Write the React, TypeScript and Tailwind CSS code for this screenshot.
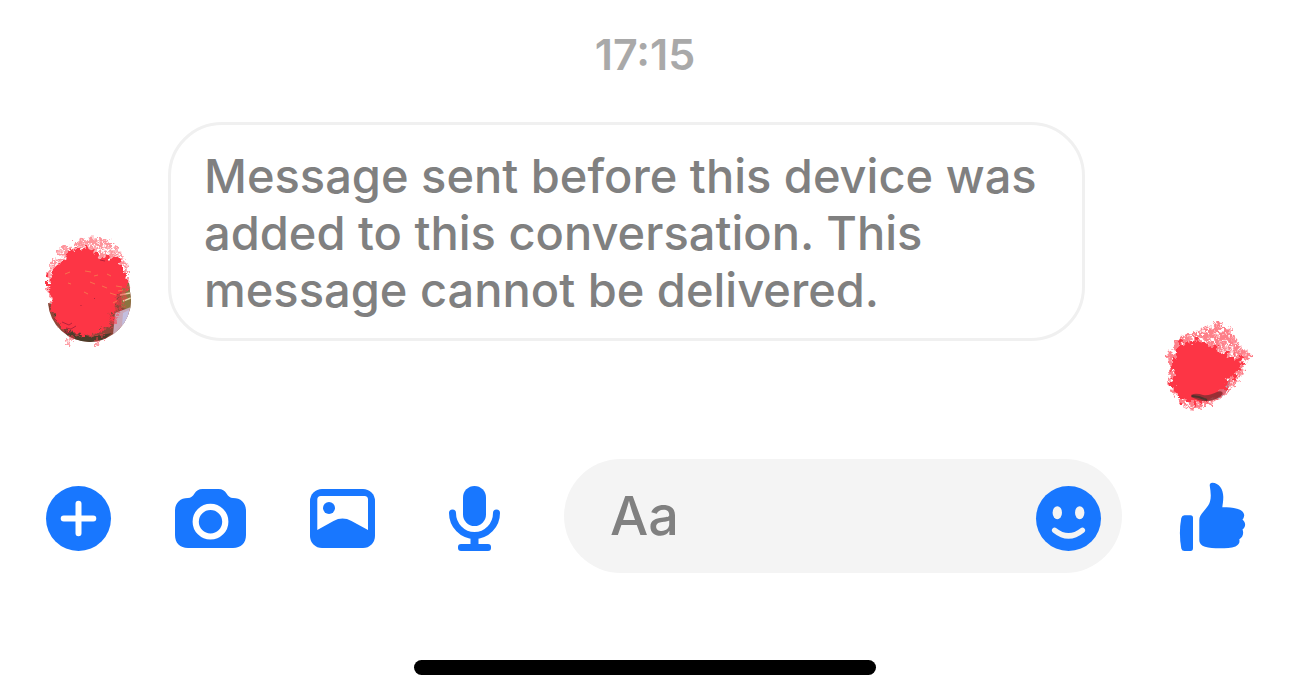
import type { ReactNode } from 'react';

const BLUE = '#1877ff';

interface IconButtonProps {
    label: string;
    children: ReactNode;
}

function IconButton({ label, children }: IconButtonProps) {
    return (
        <button type="button" aria-label={label} className="block shrink-0 cursor-pointer">
            <svg viewBox="0 0 72 72" className="block h-[72px] w-[72px]" fill={BLUE} aria-hidden="true">
                {children}
            </svg>
        </button>
    );
}

function SenderAvatar() {
    return (
        <svg viewBox="9 7 96 120" className="block h-[120px] w-24 shrink-0" role="img" aria-label="Sender">
            <defs>
                <filter id="sender-rough" x="-20%" y="-20%" width="140%" height="140%">
                    <feTurbulence type="fractalNoise" baseFrequency="0.16" numOctaves="4" seed="4" />
                    <feDisplacementMap in="SourceGraphic" scale="14" xChannelSelector="R" yChannelSelector="G" />
                    <feGaussianBlur stdDeviation="0.7" />
                </filter>
                <filter id="sender-grain" x="-20%" y="-20%" width="140%" height="140%">
                    <feTurbulence type="fractalNoise" baseFrequency="0.2 0.26" numOctaves="3" seed="9" result="noise" />
                    <feColorMatrix in="noise" type="matrix" values="0 0 0 0 0  0 0 0 0 0  0 0 0 0 0  6 0 0 0 -2.2" result="mask" />
                    <feComposite in="SourceGraphic" in2="mask" operator="in" result="spots" />
                    <feDisplacementMap in="spots" in2="noise" scale="10" xChannelSelector="R" yChannelSelector="G" />
                    <feGaussianBlur stdDeviation="0.7" />
                </filter>
                <clipPath id="sender-photo">
                    <path d="M18 78A42 42 0 0 0 60 117A42 42 0 0 0 101 75L99 58H80L56 84Z" />
                </clipPath>
            </defs>
            <g clipPath="url(#sender-photo)">
                <rect x="17" y="58" width="84" height="60" fill="#8f4638" />
                <path d="M92 58h9v28l-10-4z" fill="#8a7440" />
                <path d="M90 70l10-2M93 76l8-3" stroke="#e6d3a8" strokeWidth="1.5" />
                <path d="M85 88l16-6-4 19-14 9z" fill="#c9a8b8" />
                <path d="M93 88l6-3-2 12-5 4z" fill="#c3bfe0" />
                <path d="M17 78l9 12 14 14 20 8 22-4-12 10H42z" fill="#4a3d2a" />
            </g>
            <path
                d="M37 22L52 13l19-1 13 6 9 14 6 13 0 14-4 20-10 20-14 10-19 3-20-9-9-16-5-22-1-21 9-10 4-13Z"
                fill="#fd3a4a"
                opacity="0.55"
                filter="url(#sender-grain)"
            />
            <path
                d="M37 28L53 21l20 11 15 1 9 18 0 12-8 6-3 10-4 9-1 11-12 9-17 2-22-8-8-17-3-22 0-17 12-7Z"
                fill="#fd3544"
                filter="url(#sender-rough)"
            />
            <path d="M38 109v12M42 110v5M67 112v10M74 111v6" stroke="#fd3a4a" strokeWidth="4" opacity="0.5" filter="url(#sender-grain)" />
            <g fill="none" stroke="#f39a52" strokeWidth="1" opacity="0.6">
                <path d="M35 49l5-2M55 46l6 1M64 51l4-1M77 49l4 2M72 61l5 2M60 57l5 2M80 68l6 2M83 78l4-2M38 58l3 1M54 67l4 2M86 61l6 1M88 66l5-1" />
            </g>
            <g fill="none" stroke="#a31f38" strokeWidth="1" opacity="0.8">
                <path d="M32 97l7 3 3-2M36 103l5 1 5-3M51 80v1M64 73l1 1M70 35l5 1M24 93l3 3M34 107l6 1" />
            </g>
        </svg>
    );
}

function OwnAvatar() {
    return (
        <svg viewBox="12 8 96 96" className="block h-24 w-24 shrink-0" role="img" aria-label="Seen">
            <defs>
                <filter id="own-rough" x="-20%" y="-20%" width="140%" height="140%">
                    <feTurbulence type="fractalNoise" baseFrequency="0.18" numOctaves="4" seed="7" />
                    <feDisplacementMap in="SourceGraphic" scale="16" xChannelSelector="R" yChannelSelector="G" />
                    <feGaussianBlur stdDeviation="0.7" />
                </filter>
                <filter id="own-grain" x="-20%" y="-20%" width="140%" height="140%">
                    <feTurbulence type="fractalNoise" baseFrequency="0.2" numOctaves="3" seed="12" result="noise" />
                    <feColorMatrix in="noise" type="matrix" values="0 0 0 0 0  0 0 0 0 0  0 0 0 0 0  6 0 0 0 -2.1" result="mask" />
                    <feComposite in="SourceGraphic" in2="mask" operator="in" result="spots" />
                    <feDisplacementMap in="spots" in2="noise" scale="10" xChannelSelector="R" yChannelSelector="G" />
                    <feGaussianBlur stdDeviation="0.7" />
                </filter>
            </defs>
            <path d="M80 68c0 11-5 18-13 22l-5-6c7-3 13-8 18-16Z" fill="#a69cab" opacity="0.85" />
            <path
                d="M31 26L49 21l17-9 15 6 6 15 14 12-6 12-7 14-11 14-14 8-12 6-16-1-9-12-8-12 2-16-3-14Z"
                fill="#fd3a4a"
                opacity="0.65"
                filter="url(#own-grain)"
            />
            <path
                d="M29 34L50 30l12 5 12 9 12 2 8 6-7 10-8 8-5 11-12 7-16 6-15-3-8-15-1-22Z"
                fill="#fd3544"
                filter="url(#own-rough)"
            />
            <g opacity="0.9">
                <path d="M41 85c4-2 8-1 12 0 5 1 9-1 14-3 4-2 7 0 5 3-6 6-18 8-26 4l-5-2Z" fill="#8f2f34" />
                <path d="M42 86l7 1 8 3" fill="none" stroke="#3a332a" strokeWidth="2" />
            </g>
        </svg>
    );
}

function Composer() {
    return (
        <form className="flex items-center gap-[54px] px-[42px]" onSubmit={(e) => e.preventDefault()}>
            <div className="flex shrink-0 gap-[60px]">
                <IconButton label="More actions">
                    <circle cx="36.5" cy="38.5" r="32.5" />
                    <path d="M36.5 23.7v29.6M21.7 38.5h29.6" stroke="#fff" strokeWidth="6" strokeLinecap="round" />
                </IconButton>
                <IconButton label="Camera">
                    <path d="M28.5 9h16c4 0 6 1.6 8 4.6C54.4 16.6 56 18 59 18c8 0 13 5 13 13v24c0 8-5 13-13 13H14C6 68 1 63 1 55V31c0-8 5-13 13-13 3 0 4.6-1.4 6.5-4.4 2-3 4-4.6 8-4.6Z" />
                    <circle cx="36.5" cy="41.7" r="14.8" fill="none" stroke="#fff" strokeWidth="6.2" />
                </IconButton>
                <IconButton label="Photos">
                    <rect x="4" y="9" width="65" height="59" rx="12" />
                    <path d="M11.3 50V19.5Q11.3 16 14.8 16h43.7Q62 16 62 19.5V50L45.5 41Q36.5 36.2 27.5 41Z" fill="#fff" />
                    <circle cx="23" cy="28" r="6" />
                </IconButton>
                <IconButton label="Voice message">
                    <rect x="25" y="6" width="23" height="40" rx="11.5" />
                    <path d="M14.5 33a22 22.5 0 0 0 44 0" fill="none" stroke={BLUE} strokeWidth="7" strokeLinecap="round" />
                    <path d="M32.5 57h8v8h-8z" />
                    <rect x="20" y="64" width="33" height="7" rx="3" />
                </IconButton>
            </div>
            <div className="flex h-[114px] min-w-0 flex-1 items-center rounded-full bg-[#f4f4f4] pr-[18px] pl-[46px]">
                <input
                    type="text"
                    aria-label="Message"
                    placeholder="Aa"
                    className="min-w-0 flex-1 bg-transparent text-[54px] leading-[64px] font-medium text-[#808080] outline-none placeholder:text-[#808080]"
                />
                <IconButton label="Emoji">
                    <circle cx="36.5" cy="38.5" r="32.5" />
                    <g fill="#f4f4f4">
                        <ellipse cx="25.3" cy="32.7" rx="4.7" ry="6.5" />
                        <ellipse cx="47.7" cy="32.7" rx="4.7" ry="6.5" />
                    </g>
                    <path d="M22.7 50.3Q36.5 61.5 50.3 50.3" fill="none" stroke="#f4f4f4" strokeWidth="5.5" strokeLinecap="round" />
                </IconButton>
            </div>
            <IconButton label="Send a like">
                <path d="M8.5 35.3H14.5Q17 35.3 17 38V68Q17 71 14.5 71H8.5Q6 71 5.3 68.5Q2.5 53 5.3 38Q6 35.3 8.5 35.3Z" />
                <path d="M36.3 2.7C43 3 47.3 9 47.3 17C47.3 21 46.7 24 46.3 27.3C52 27.3 57 27.7 61 28.7C66 30 69 33 68 36.5C67.7 38 67 39 66.5 39.7C70 42 70 47 66.5 49.5C68 53 67 57 63.3 59.3C64 62.5 63 65 59.5 66.5C55 68 50 68.3 44 68.3C38 68.3 33 68 29 66.7C25.5 65.5 23.3 63.5 23.3 60V40C23.3 36.5 25 34.5 27.3 31.7C30.5 28 33 25 34 21.5C35.5 16 34.5 11 33.8 6C33.5 4 34.3 2.7 36.3 2.7Z" />
            </IconButton>
        </form>
    );
}

export default function App() {
    return (
        <main className="bg-white pt-[30px] pb-6 font-['Inter','Liberation_Sans',sans-serif]">
            <time className="block text-center text-[43px] leading-[48px] font-semibold text-[#a9a9a9]">17:15</time>

            <section className="mt-11 flex items-end justify-between pr-8 pl-[39px]">
                <div className="flex min-w-0 items-end gap-[33px] pb-[62px]">
                    <SenderAvatar />
                    <p className="mb-[11px] max-w-[917px] rounded-[54px] border-[3px] border-[#f0f0f0] px-[33px] pt-[22px] pb-5 text-[47px] leading-[57px] font-medium text-[#808080]">
                        Message sent before this device was added to this conversation. This message cannot be delivered.
                    </p>
                </div>
                <OwnAvatar />
            </section>

            <div className="mt-[45px]">
                <Composer />
            </div>

            {/* Home indicator */}
            <div className="mx-auto mt-[87px] h-[15px] w-[462px] rounded-full bg-black" />
        </main>
    );
}
